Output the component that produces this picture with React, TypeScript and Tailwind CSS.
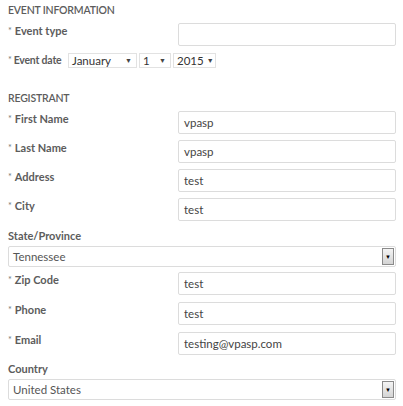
import React from "react";

function Label({ text, required = true }: { text: string; required?: boolean }) {
  return (
    <div className="w-[170px] shrink-0 pt-[1px] text-[11px] font-bold leading-[14px] text-[#5c5c5c]">
      {required && <span className="mr-[3px] align-top text-[9px] font-normal text-[#777]">*</span>}
      {text}
    </div>
  );
}

function TextRow({ label, value }: { label: string; value: string }) {
  return (
    <div className="flex h-[23px]">
      <Label text={label} />
      <div className="flex h-[23px] w-[218px] items-center rounded-[2px] border border-[#dcdcdc] bg-white px-[5px] text-[11.5px] text-[#444]">
        {value}
      </div>
    </div>
  );
}

function MiniSelect({ value, width }: { value: string; width: string }) {
  return (
    <div
      className={`flex h-[15px] items-center justify-between gap-[3px] border border-[#e2e2e2] bg-white pl-[3px] pr-[4px] text-[11.5px] leading-none text-[#333] ${width}`}
    >
      <span>{value}</span>
      <span className="text-[7px] text-[#444]">▼</span>
    </div>
  );
}

function WideSelect({ value }: { value: string }) {
  return (
    <div className="flex h-[21px] w-[388px] items-center justify-between rounded-[2px] border border-[#dcdcdc] bg-white pl-[4px] pr-[1px] text-[11.5px] text-[#555]">
      <span>{value}</span>
      <span className="flex h-[17px] w-[12px] items-center justify-center border border-[#8a8a8a] bg-gradient-to-b from-[#f4f4f4] to-[#d4d4d4] text-[6px] text-black">
        ▼
      </span>
    </div>
  );
}

export default function App() {
  return (
    <div className="h-[406px] w-[403px] bg-white pl-[8px] pt-[3px] font-['Lato',sans-serif]">
      <div className="h-[14px] text-[10.5px] font-semibold leading-[14px] tracking-[-0.2px] text-[#5c5c5c]">
        EVENT INFORMATION
      </div>

      <div className="mt-[6px]">
        <TextRow label="Event type" value="" />
      </div>

      <div className="mt-[7px] flex h-[15px] items-center">
        <div className="w-[60px] shrink-0 whitespace-nowrap text-[10.5px] font-bold tracking-[-0.2px] text-[#5c5c5c]">
          <span className="mr-[2px] align-top text-[9px] font-normal text-[#777]">*</span>
          Event date
        </div>
        <div className="flex gap-[2px]">
          <MiniSelect value="January" width="w-[69px]" />
          <MiniSelect value="1" width="w-[32px]" />
          <MiniSelect value="2015" width="w-[43px]" />
        </div>
      </div>

      <div className="mt-[23px] h-[14px] text-[10.5px] font-semibold leading-[14px] tracking-[-0.2px] text-[#5c5c5c]">
        REGISTRANT
      </div>

      <div className="mt-[6px] flex flex-col gap-[6px]">
        <TextRow label="First Name" value="vpasp" />
        <TextRow label="Last Name" value="vpasp" />
        <TextRow label="Address" value="test" />
        <TextRow label="City" value="test" />
      </div>

      <div className="mt-[8px] h-[14px] text-[11px] font-bold leading-[14px] text-[#5c5c5c]">State/Province</div>
      <div className="mt-[3px]">
        <WideSelect value="Tennessee" />
      </div>

      <div className="mt-[5px] flex flex-col gap-[7px]">
        <TextRow label="Zip Code" value="test" />
        <TextRow label="Phone" value="test" />
        <TextRow label="Email" value="testing@vpasp.com" />
      </div>

      <div className="mt-[7px] h-[14px] text-[11px] font-bold leading-[14px] text-[#5c5c5c]">Country</div>
      <div className="mt-[3px]">
        <WideSelect value="United States" />
      </div>
    </div>
  );
}
